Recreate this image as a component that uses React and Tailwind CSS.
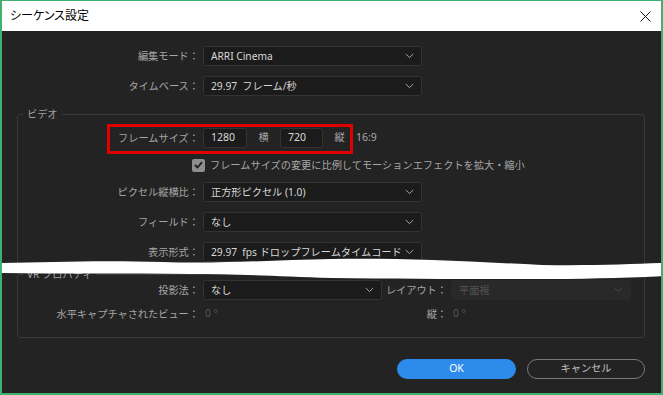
import React from "react";

const Chevron = ({ color = "#a8a8a8" }) => (
  <svg width="9" height="6" viewBox="0 0 9 6" className="shrink-0">
    <polyline points="0.8,1 4.5,4.6 8.2,1" fill="none" stroke={color} strokeWidth="1" />
  </svg>
);

const Select = ({ value, width = "w-[219px]", disabled = false }) => (
  <div
    className={`${width} ml-[4px] shrink-0 h-[20px] flex items-center justify-between pl-[7px] pr-[7px] rounded-[3px] ${
      disabled ? "bg-[#292929] border border-[#292929] text-[#555555]" : "bg-[#1b1b1b] border border-[#333333] text-[#d8d8d8]"
    }`}
  >
    <span className="text-[10.2px] leading-none whitespace-pre">{value}</span>
    <Chevron color={disabled ? "#4a4a4a" : "#a8a8a8"} />
  </div>
);

const Label = ({ children, width }) => (
  <div className={`${width} shrink-0 text-right text-[10.2px] leading-none text-[#a6a6a6] whitespace-nowrap`}>
    {children}
  </div>
);

export default function App() {
  return (
    <div className="w-[663px] h-[395px] overflow-hidden relative flex flex-col bg-[#232323] border-x-2 border-b-2 border-t border-[#40b06f] [font-family:'Noto_Sans','Noto_Sans_CJK_JP',sans-serif]">
      {/* Title bar */}
      <div className="h-[30px] shrink-0 bg-white flex items-center justify-between pl-[8px] pr-[10px]">
        <span className="text-[12px] text-black leading-none [font-feature-settings:'palt']">シーケンス設定</span>
        <svg width="11" height="11" viewBox="0 0 11 11">
          <line x1="0.5" y1="0.5" x2="10.5" y2="10.5" stroke="#111" strokeWidth="1" />
          <line x1="10.5" y1="0.5" x2="0.5" y2="10.5" stroke="#111" strokeWidth="1" />
        </svg>
      </div>

      <div className="flex-1 flex flex-col pt-[15px]">
        <div className="flex flex-col gap-[10px]">
          <div className="flex items-center h-[20px]">
            <Label width="w-[197px]">編集モード：</Label>
            <Select value="ARRI Cinema" />
          </div>
          <div className="flex items-center h-[20px]">
            <Label width="w-[197px]">タイムベース：</Label>
            <Select value="29.97  フレーム/秒" />
          </div>
        </div>

        {/* Video group */}
        <fieldset className="ml-[15px] mr-[16px] mt-[11px] border border-[#393939] rounded-[3px] pt-[7px] pb-[5px]">
          <legend className="ml-[5px] px-[4px] text-[10.2px] leading-[14px] text-[#a0a0a0]">ビデオ</legend>
          <div className="flex flex-col gap-[10px]">
            <div className="relative flex items-center h-[20px]">
              <Label width="w-[181px]">フレームサイズ：</Label>
              <div className="ml-[4px] w-[44px] h-[20px] flex items-center pl-[7px] bg-[#1b1b1b] border border-[#333333] rounded-[3px] text-[10.5px] text-[#d8d8d8]">1280</div>
              <div className="w-[33px] text-center text-[10.2px] text-[#a6a6a6]">横</div>
              <div className="w-[43px] h-[20px] flex items-center pl-[7px] bg-[#1b1b1b] border border-[#333333] rounded-[3px] text-[10.5px] text-[#d8d8d8]">720</div>
              <div className="w-[33px] text-center text-[10.2px] text-[#a6a6a6]">縦</div>
              <div className="text-[10.5px] text-[#a6a6a6]">16:9</div>
              <div className="absolute left-[89px] top-[-4px] w-[246px] h-[30px] border-[3px] border-[#e00000] pointer-events-none" />
            </div>
            <div className="flex items-center h-[14px] pl-[174px]">
              <div className="w-[13px] h-[13px] rounded-[2px] bg-[#8e8e8e] flex items-center justify-center">
                <svg width="9" height="8" viewBox="0 0 9 8">
                  <polyline points="1,4 3.5,6.5 8,1.2" fill="none" stroke="#1e1e1e" strokeWidth="1.8" />
                </svg>
              </div>
              <span className="ml-[5px] text-[10.2px] leading-none text-[#a6a6a6] whitespace-nowrap">
                フレームサイズの変更に比例してモーションエフェクトを拡大・縮小
              </span>
            </div>
            <div className="flex items-center h-[20px]">
              <Label width="w-[181px]">ピクセル縦横比：</Label>
              <Select value="正方形ピクセル (1.0)" />
            </div>
            <div className="flex items-center h-[20px]">
              <Label width="w-[181px]">フィールド：</Label>
              <Select value="なし" />
            </div>
            <div className="flex items-center h-[20px]">
              <Label width="w-[181px]">表示形式：</Label>
              <Select value="29.97  fps ドロップフレームタイムコード" />
            </div>
          </div>
        </fieldset>

        {/* VR group */}
        <fieldset className="ml-[15px] mr-[16px] border border-[#393939] rounded-[3px] pt-0 pb-[16px]">
          <legend className="ml-[5px] px-[4px] text-[10.2px] leading-[12px] text-[#a0a0a0]">VR プロパティ</legend>
          <div className="flex flex-col gap-[7px]">
            <div className="flex items-center h-[20px]">
              <Label width="w-[181px]">投影法：</Label>
              <Select value="なし" width="w-[179px]" />
              <Label width="w-[65px]">レイアウト：</Label>
              <Select value="平面視" width="w-[180px]" disabled />
            </div>
            <div className="flex items-center h-[14px]">
              <Label width="w-[181px]">水平キャプチャされたビュー：</Label>
              <span className="ml-[6px] w-[177px] shrink-0 text-[10.2px] text-[#555555]">0 °</span>
              <Label width="w-[65px]">縦：</Label>
              <span className="ml-[6px] text-[10.2px] text-[#555555]">0 °</span>
            </div>
          </div>
        </fieldset>

        {/* Buttons */}
        <div className="mt-[21px] mr-[16px] flex justify-end gap-[11px]">
          <div className="w-[119px] h-[20px] rounded-full bg-[#2d8ceb] flex items-center justify-center text-[10.5px] text-white">OK</div>
          <div className="w-[118px] h-[20px] rounded-full border border-[#7a7a7a] flex items-center justify-center text-[10.2px] text-[#c4c4c4]">キャンセル</div>
        </div>
      </div>

      {/* Wave cut overlay */}
      <svg className="absolute left-0 top-[245px] pointer-events-none" width="663" height="40" viewBox="0 0 663 40">
        <path
          d="M0,17 C50,16 100,14 160,16 C220,18 270,14 330,13 C400,12 460,15 540,19 C590,20 630,18 663,17 L663,30 C620,32 580,33 530,33 C460,33 390,33 330,32 C270,30 230,28 190,28 C120,27 60,28 0,27 Z"
          fill="#ffffff"
        />
      </svg>
    </div>
  );
}
